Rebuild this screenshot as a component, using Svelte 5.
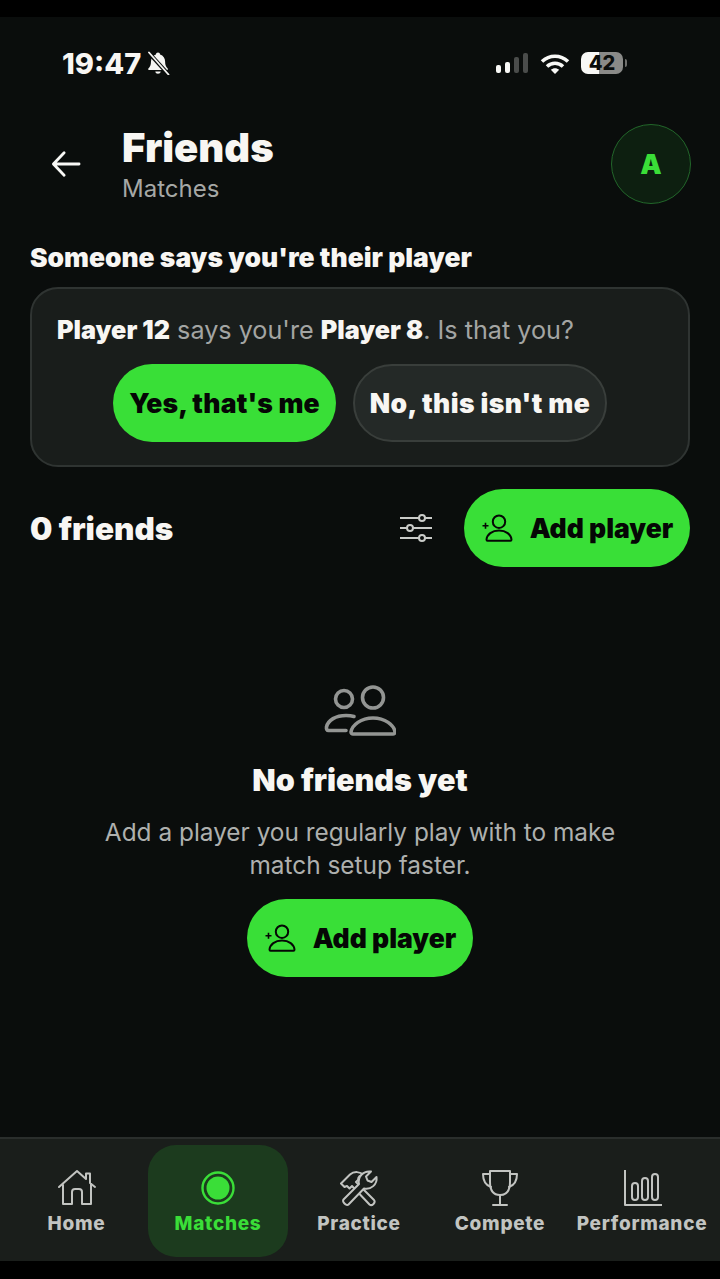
<script lang="ts">
  const navItems = [
    { label: 'Home', id: 'home' },
    { label: 'Matches', id: 'matches', active: true },
    { label: 'Practice', id: 'practice' },
    { label: 'Compete', id: 'compete' },
    { label: 'Performance', id: 'performance' }
  ];
</script>

{#snippet addPlayer()}
  <button class="pill green add">
    <svg class="addIcon" viewBox="0 0 32 28" fill="none" stroke="currentColor" stroke-width="2">
      <circle cx="18" cy="7.700" r="6.200" />
      <path d="M18 16.500c-7 0-12 4-12.500 9 0 .8.4 1.200 1 1.200h23c.6 0 1-.4 1-1.200-.5-5-5.500-9-12.500-9z" stroke-linejoin="round" />
      <path d="M1.500 11.700h6M4.500 8.700v6" stroke-width="1.600" />
    </svg>
    Add player
  </button>
{/snippet}

<div class="screen">
  <div class="statusBar">
    <div class="time">
      19:47
      <svg class="bell" viewBox="0 0 24 24">
        <path fill="#f5f5f3" d="M12 1.500c1.200 0 2 .8 2.100 1.900 3.200 1 5 3.800 5 7.200 0 3.600 1 5.400 2.600 6.900.5.500.2 1.500-.6 1.500H3c-.8 0-1.200-1-.6-1.500C4 16 5 14.200 5 10.600c0-3.400 1.800-6.200 4.900-7.200C10 2.300 10.800 1.500 12 1.500z" />
        <path fill="#f5f5f3" d="M9.300 20.500h5.400c-.2 1.300-1.300 2.300-2.700 2.300s-2.500-1-2.700-2.300z" />
        <path stroke="#0a0d0c" stroke-width="4" d="M2 1l21 23" />
        <path stroke="#f5f5f3" stroke-width="1.800" stroke-linecap="round" d="M3 1.500l19.500 22" />
      </svg>
    </div>
    <div class="indicators">
      <div class="signal">
        <i class="on" style="height: 8px"></i>
        <i class="on" style="height: 11px"></i>
        <i style="height: 16px"></i>
        <i style="height: 20px"></i>
      </div>
      <svg class="wifi" viewBox="0 0 30 21" fill="none" stroke="#f8f8f6" stroke-width="3.600">
        <path d="M2 8.500c7.500-7 18.500-7 26 0" />
        <path d="M7 13.500c4.600-4.300 11.400-4.300 16 0" />
        <path d="M15 21l-4.200-4.200c2.400-2.100 6-2.100 8.400 0z" fill="#f8f8f6" stroke="none" />
      </svg>
      <div class="battery"><span>42</span></div>
      <div class="batteryTip"></div>
    </div>
  </div>

  <header>
    <svg class="back" viewBox="0 0 32 30" fill="none" stroke="#f8f8f6" stroke-width="3" stroke-linecap="round" stroke-linejoin="round">
      <path d="M30 15H3M14 3L2.500 15 14 27" />
    </svg>
    <div class="titles">
      <h1>Friends</h1>
      <div class="sub">Matches</div>
    </div>
    <div class="avatar">A</div>
  </header>

  <h2>Someone says you're their player</h2>
  <section class="claim">
    <p><b>Player 12</b> says you're <b>Player 8</b>. Is that you?</p>
    <div class="claimActions">
      <button class="pill green yes">Yes, that's me</button>
      <button class="pill ghost">No, this isn't me</button>
    </div>
  </section>

  <div class="friendsRow">
    <div class="count">0 friends</div>
    <svg class="sliders" viewBox="0 0 32 28" fill="none" stroke="#c9cbc8" stroke-width="2">
      <path d="M0 4h32M0 14h32M0 24h32" />
      <circle cx="22" cy="4" r="3" fill="#0a0d0c" />
      <circle cx="10" cy="14" r="3" fill="#0a0d0c" />
      <circle cx="22" cy="24" r="3" fill="#0a0d0c" />
    </svg>
    {@render addPlayer()}
  </div>

  <div class="empty">
    <svg class="people" viewBox="0 0 72 54" fill="none" stroke="#939593" stroke-width="3.600" stroke-linejoin="round">
      <circle cx="20" cy="16" r="8.500" />
      <circle cx="49" cy="14.500" r="10.500" />
      <path d="M30 33.500c-2-.6-5-1-8-1C12 32.500 4 37 2.500 44c-.3 2 .5 3.500 2 3.500H22" stroke-linecap="round" />
      <path d="M49 35c-12 0-21 7-22 14 0 1 1 2 2 2h40c1 0 2-1 2-2-1-7-10-14-22-14z" />
    </svg>
    <h3>No friends yet</h3>
    <p>Add a player you regularly play with to make<br />match setup faster.</p>
    {@render addPlayer()}
  </div>

  <nav>
    {#each navItems as item}
      <div class="navItem" class:active={item.active}>
        <svg viewBox="0 0 40 38" fill="none" stroke="currentColor" stroke-width="2" stroke-linejoin="round" stroke-linecap="round">
          {#if item.id === 'home'}
            <path d="M2 18L20 2l9 8V4.500h4v9.500L38 18" />
            <path d="M6 16v19h9V23c0-2 1-3 3-3h4c2 0 3 1 3 3v12h9V15" />
          {:else if item.id === 'matches'}
            <circle cx="20" cy="19" r="15.500" stroke-width="2.400" />
            <circle cx="20" cy="19" r="11.500" fill="currentColor" stroke="none" />
          {:else if item.id === 'practice'}
            <path d="M2 14.500L11 5.500C15 2 21 2.500 25 6c-4 0-6 2-6 5l-2 2 18 18c2 2.500-2 6.500-4.500 4.500L13 17l-2.500 2.500L8 17l-2.500 1z" fill="#1a1e1b" />
            <path d="M4.500 30.500L20 15c-1.500-7 4-13.500 12-12.500l-5 5 1.500 4 4 1.500 5-5c1 7.500-5.500 13-12.500 11.500L9.500 35.500c-2 2-7-3-5-5z" fill="#1a1e1b" />
          {:else if item.id === 'compete'}
            <path d="M10 2h20v11c0 8-3 13-10 13S10 21 10 13z" />
            <path d="M10 5H3c0 7 2 11 8 13M30 5h7c0 7-2 11-8 13M20 26v9M13 36h14" />
          {:else}
            <path d="M3 1v35h37" stroke-linecap="butt" />
            <rect x="10" y="14" width="6" height="17" rx="3" />
            <rect x="20" y="9" width="6" height="22" rx="3" />
            <rect x="30" y="5" width="6" height="26" rx="3" />
          {/if}
        </svg>
        <span>{item.label}</span>
      </div>
    {/each}
  </nav>
  <div class="homeBar"></div>
</div>

<style>
  :global(body) {
    background: #0a0d0c;
  }

  .screen {
    width: 720px;
    height: 1279px;
    box-sizing: border-box;
    display: flex;
    flex-direction: column;
    overflow: hidden;
    border-top: 17px solid #000;
    background: #0a0d0c;
    color: #f8f6f3;
    font-family: Inter, "Liberation Sans", sans-serif;
  }

  .statusBar {
    box-sizing: border-box;
    height: 92px;
    padding: 0 93px 0 62px;
    display: flex;
    justify-content: space-between;
    align-items: center;
    flex: none;
  }

  .time {
    display: flex;
    align-items: center;
    font-size: 29px;
    font-weight: 800;
  }

  .bell {
    width: 24px;
    height: 24px;
    margin-left: 5px;
  }

  .indicators {
    display: flex;
    align-items: center;
  }

  .signal {
    display: flex;
    align-items: flex-end;
    gap: 4px;
    height: 20px;
    margin-right: 12px;
  }

  .signal i {
    width: 5px;
    border-radius: 2px;
    background: #4a4c4b;
  }

  .signal i.on {
    background: #f8f8f6;
  }

  .wifi {
    width: 30px;
    height: 21px;
    margin-right: 11px;
  }

  .battery {
    width: 42px;
    height: 22px;
    border-radius: 7px;
    background: linear-gradient(90deg, #f8f8f6 43%, #8a8a88 43%);
    color: #0a0d0c;
    font-size: 20px;
    font-weight: 800;
    line-height: 22px;
    text-align: center;
  }

  .batteryTip {
    width: 2px;
    height: 8px;
    margin-left: 2px;
    border-radius: 0 2px 2px 0;
    background: #6f6f6d;
  }

  header {
    box-sizing: border-box;
    display: flex;
    align-items: center;
    height: 133px;
    padding: 0 29px 23px 51px;
    flex: none;
  }

  .back {
    width: 30px;
    height: 28px;
    margin-right: 41px;
  }

  .titles {
    flex: 1;
  }

  h1 {
    margin: 0;
    font-size: 40px;
    font-weight: 900;
    line-height: 46px;
  }

  .sub {
    font-size: 24px;
    line-height: 28px;
    color: #a6a8a6;
    margin-top: 4px;
  }

  .avatar {
    width: 80px;
    height: 80px;
    box-sizing: border-box;
    border-radius: 50%;
    border: 1.500px solid #22662a;
    background: #0d1f10;
    color: #3ade38;
    font-size: 27px;
    font-weight: 900;
    display: flex;
    align-items: center;
    justify-content: center;
  }

  h2 {
    margin: 0;
    padding: 0 30px;
    font-size: 26.400px;
    font-weight: 900;
    line-height: 30px;
  }

  .claim {
    margin: 15px 30px 0;
    height: 180px;
    box-sizing: border-box;
    padding: 26px 25px 0;
    border: 2px solid #2f3432;
    border-radius: 28px;
    background: #191d1b;
  }

  .claim p {
    margin: 0;
    font-size: 25.200px;
    line-height: 30px;
    color: #a3a5a3;
    white-space: nowrap;
  }

  .claim b {
    font-weight: 900;
    color: #f8f6f3;
  }

  .claimActions {
    display: flex;
    justify-content: center;
    gap: 17px;
    margin-top: 19px;
  }

  .pill {
    height: 78px;
    box-sizing: border-box;
    border-radius: 39px;
    border: none;
    font-family: inherit;
    font-size: 26.500px;
    font-weight: 900;
    white-space: nowrap;
    display: flex;
    align-items: center;
    justify-content: center;
  }

  .green {
    background: #39df37;
    color: #050705;
  }

  .ghost {
    width: 254px;
    background: #242927;
    border: 2px solid #393e3b;
    color: #f8f6f3;
    letter-spacing: 0.4px;
  }

  .yes {
    width: 223px;
    letter-spacing: 0.2px;
  }

  .friendsRow {
    display: flex;
    align-items: center;
    margin-top: 22px;
    padding: 0 30px;
  }

  .count {
    flex: 1;
    font-size: 31.500px;
    font-weight: 900;
  }

  .sliders {
    width: 32px;
    height: 28px;
    margin-right: 32px;
  }

  .add {
    width: 226px;
    gap: 17px;
  }

  .addIcon {
    width: 32px;
    height: 28px;
  }

  .empty {
    display: flex;
    flex-direction: column;
    align-items: center;
    margin-top: 116px;
  }

  .people {
    width: 72px;
    height: 54px;
  }

  h3 {
    margin: 25px 0 0;
    font-size: 30.500px;
    font-weight: 900;
    line-height: 36px;
  }

  .empty p {
    margin: 18px 0 0;
    font-size: 24.400px;
    line-height: 33px;
    text-align: center;
    color: #aeb0ae;
  }

  .empty .add {
    margin-top: 17px;
  }

  nav {
    margin-top: auto;
    height: 124px;
    box-sizing: border-box;
    flex: none;
    display: grid;
    grid-template-columns: 143px 140px 142px 140px 144px;
    padding: 6px 0 0 5px;
    border-top: 2px solid #2a2e2c;
    background: #1a1e1b;
  }

  .navItem {
    height: 112px;
    border-radius: 28px;
    display: flex;
    flex-direction: column;
    align-items: center;
    justify-content: flex-start;
    padding-top: 24px;
    box-sizing: border-box;
    color: #c2c4c1;
  }

  .navItem svg {
    width: 40px;
    height: 38px;
  }

  .navItem span {
    font-size: 19px;
    font-weight: 800;
    letter-spacing: 0.7px;
    line-height: 24px;
    margin-top: 5px;
    white-space: nowrap;
  }

  .active {
    background: #1c3b1e;
    color: #3ade38;
  }

  .homeBar {
    height: 18px;
    flex: none;
    background: #000;
  }
</style>
